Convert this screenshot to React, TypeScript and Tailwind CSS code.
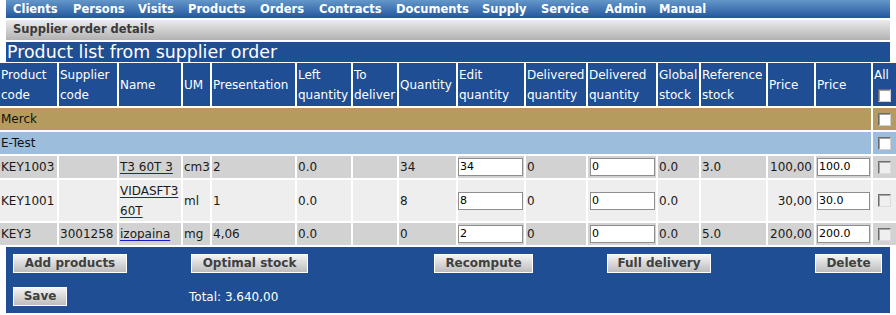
import React from "react";

const font = "font-['DejaVu_Sans',Verdana,sans-serif]";

const menu: [string, string][] = [
  ["Clients", "w-[60px]"],
  ["Persons", "w-[65px]"],
  ["Visits", "w-[50px]"],
  ["Products", "w-[72px]"],
  ["Orders", "w-[59px]"],
  ["Contracts", "w-[77px]"],
  ["Documents", "w-[86px]"],
  ["Supply", "w-[59px]"],
  ["Service", "w-[64px]"],
  ["Admin", "w-[54px]"],
  ["Manual", "w-[60px]"],
];

const headers: string[][] = [
  ["Product", "code"],
  ["Supplier", "code"],
  ["Name"],
  ["UM"],
  ["Presentation"],
  ["Left", "quantity"],
  ["To", "deliver"],
  ["Quantity"],
  ["Edit", "quantity"],
  ["Delivered", "quantity"],
  ["Delivered", "quantity"],
  ["Global", "stock"],
  ["Reference", "stock"],
  ["Price"],
  ["Price"],
];

type Row = {
  code: string;
  supplier: string;
  name: string[];
  um: string;
  pres: string;
  left: string;
  qty: string;
  edit: string;
  global: string;
  ref: string;
  price: string;
  priceIn: string;
  bg: string;
  tall?: boolean;
};

const rows: Row[] = [
  { code: "KEY1003", supplier: "", name: ["T3 60T 3"], um: "cm3", pres: "2", left: "0.0", qty: "34", edit: "34", global: "0.0", ref: "3.0", price: "100,00", priceIn: "100.0", bg: "bg-[#d2d2d2]" },
  { code: "KEY1001", supplier: "", name: ["VIDASFT3", "60T"], um: "ml", pres: "1", left: "0.0", qty: "8", edit: "8", global: "0.0", ref: "", price: "30,00", priceIn: "30.0", bg: "bg-[#eeeeee]", tall: true },
  { code: "KEY3", supplier: "3001258", name: ["izopaina"], um: "mg", pres: "4,06", left: "0.0", qty: "0", edit: "2", global: "0.0", ref: "5.0", price: "200,00", priceIn: "200.0", bg: "bg-[#d2d2d2]" },
];

function WhiteBox() {
  return (
    <span className="block w-[13px] h-[13px] bg-white border border-t-[#6b6b6b] border-l-[#6b6b6b] border-r-[#d0d0d0] border-b-[#d0d0d0] shadow-[inset_1px_1px_0_#a0a0a0]" />
  );
}

function GrayBox() {
  return (
    <span className="block w-[13px] h-[13px] bg-[#efefef] border border-t-[#6e6e6e] border-l-[#6e6e6e] border-r-[#dcdcdc] border-b-[#dcdcdc] shadow-[inset_1px_1px_0_#a8a8a8]" />
  );
}

function Btn({ label, w }: { label: string; w: string }) {
  return (
    <button className={`${w} h-[19px] border border-white bg-gradient-to-b from-[#f4f4f4] to-[#bdbdbd] text-[12px] font-bold text-[#404040] leading-[17px] flex items-center justify-center`}>
      {label}
    </button>
  );
}

function Cell({ children, className = "" }: { children?: React.ReactNode; className?: string }) {
  return <div className={`flex items-center px-[1px] ${className}`}>{children}</div>;
}

export default function App() {
  return (
    <div className={`w-[896px] h-[315px] bg-white ${font} overflow-hidden`}>
      {/* Menu */}
      <div className="mx-[6px] h-[18px] bg-gradient-to-b from-[#6497c9] to-[#23579d] flex items-center pl-[7px]">
        {menu.map(([m, w]) => (
          <span key={m} className={`${w} shrink-0 whitespace-nowrap text-white font-bold text-[11.5px] leading-[16px]`}>
            {m}
          </span>
        ))}
      </div>
      {/* Subtitle */}
      <div className="mx-[6px] mt-[2px] h-[20px] bg-gradient-to-b from-[#ececec] to-[#b2b2b2] flex items-center pl-[7px]">
        <span className="text-[11.5px] font-bold text-[#3a3a3a]">Supplier order details</span>
      </div>
      {/* Title */}
      <div className="mx-[6px] mt-[2px] h-[20px] bg-[#1f4e94] flex items-center pl-[1px]">
        <span className="text-white text-[17.4px] leading-[20px]">Product list from supplier order</span>
      </div>
      {/* Table */}
      <div className="mt-[1px] grid grid-cols-[57px_58px_62px_27px_83px_54px_44px_57px_66px_60px_68px_41px_65px_46px_55px_23px] gap-[2px] text-[12px] leading-[20px]">
        {headers.map((h, i) => (
          <div key={i} className="bg-[#1f4e94] text-white h-[43px] flex flex-col justify-center px-[1px] leading-[20px] text-[12px]">
            {h.map((l, j) => (
              <span key={j} className="whitespace-nowrap">{l}</span>
            ))}
          </div>
        ))}
        <div className="bg-[#1f4e94] text-white h-[43px] flex flex-col px-[1px] text-[12px] leading-[18px] pt-[3px]">
          <span>All</span>
          <span className="ml-[4px] mt-[5px]"><WhiteBox /></span>
        </div>

        {/* Merck */}
        <div className="col-span-15 bg-[#b59b5e] h-[22px] flex items-center px-[1px] text-[#111]">Merck</div>
        <div className="bg-[#b59b5e] h-[22px] flex items-center pl-[5px]"><WhiteBox /></div>
        {/* E-Test */}
        <div className="col-span-15 bg-[#9dbddd] h-[22px] flex items-center px-[1px] text-[#111]">E-Test</div>
        <div className="bg-[#9dbddd] h-[22px] flex items-center pl-[5px]"><WhiteBox /></div>

        {rows.map((r) => {
          const h = r.tall ? "h-[41px]" : "h-[22px]";
          const c = `${r.bg} ${h} text-[#1a1a1a]`;
          return (
            <React.Fragment key={r.code}>
              <Cell className={c}>{r.code}</Cell>
              <Cell className={c}>{r.supplier}</Cell>
              <Cell className={c}>
                <span className="flex flex-col">
                  {r.name.map((n) => (
                    <span key={n} className="underline decoration-[#1a1ad0] underline-offset-[2px] whitespace-nowrap">{n}</span>
                  ))}
                </span>
              </Cell>
              <Cell className={c}>{r.um}</Cell>
              <Cell className={c}>{r.pres}</Cell>
              <Cell className={c}>{r.left}</Cell>
              <Cell className={c}></Cell>
              <Cell className={c}>{r.qty}</Cell>
              <div className={`${c} flex items-center`}>
                <input readOnly value={r.edit} className="w-[65px] h-[18px] bg-white border border-[#8e8e8e] text-[11px] px-[1px] text-black outline-none" />
              </div>
              <Cell className={c}>0</Cell>
              <div className={`${c} flex items-center pl-[2px]`}>
                <input readOnly value="0" className="w-[65px] h-[18px] bg-white border border-[#8e8e8e] text-[11px] px-[1px] text-black outline-none" />
              </div>
              <Cell className={c}>{r.global}</Cell>
              <Cell className={c}>{r.ref}</Cell>
              <Cell className={`${c} justify-end pr-[2px]`}>{r.price}</Cell>
              <div className={`${c} flex items-center pl-[1px]`}>
                <input readOnly value={r.priceIn} className="w-[53px] h-[18px] bg-white border border-[#8e8e8e] text-[11px] px-[1px] text-black outline-none" />
              </div>
              <div className={`${c} flex items-center pl-[5px]`}><GrayBox /></div>
            </React.Fragment>
          );
        })}
      </div>
      {/* Bottom panel */}
      <div className="mx-[6px] mt-[2px] h-[66px] bg-[#1f4e94] pt-[7px] pl-[7px]">
        <div className="flex">
          <Btn label="Add products" w="w-[114px]" />
          <span className="w-[64px]" />
          <Btn label="Optimal stock" w="w-[117px]" />
          <span className="w-[126px]" />
          <Btn label="Recompute" w="w-[99px]" />
          <span className="w-[74px]" />
          <Btn label="Full delivery" w="w-[104px]" />
          <span className="w-[104px]" />
          <Btn label="Delete" w="w-[67px]" />
        </div>
        <div className="flex items-center mt-[14px]">
          <Btn label="Save" w="w-[54px]" />
          <span className="ml-[122px] text-white text-[12px]">Total: 3.640,00</span>
        </div>
      </div>
    </div>
  );
}
